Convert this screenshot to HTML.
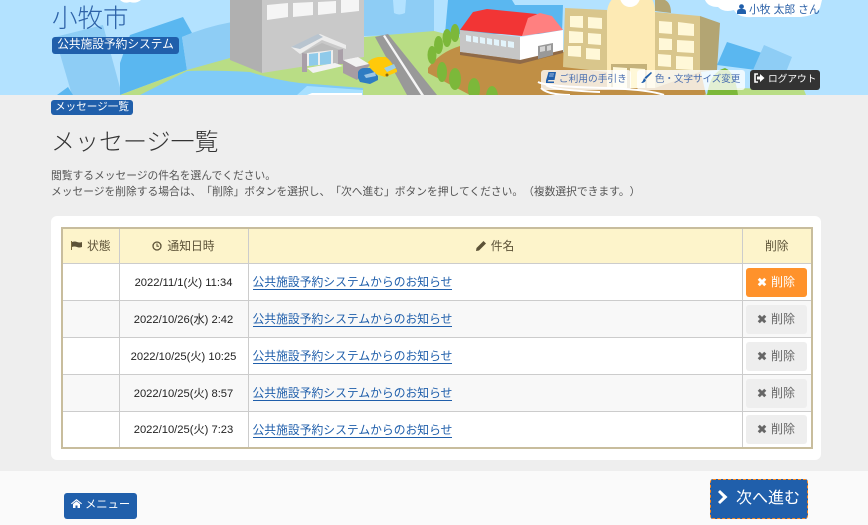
<!DOCTYPE html>
<html lang="ja"><head><meta charset="utf-8"><title>メッセージ一覧</title>
<style>
*{box-sizing:border-box}
html,body{margin:0;padding:0}
body{width:868px;height:525px;overflow:hidden;position:relative;background:#eee;font-family:"Liberation Sans","Noto Sans CJK JP",sans-serif;color:#333;text-spacing-trim:space-all}
.a{position:absolute;white-space:nowrap}
.badge{background:#205fab;color:#fff;border-radius:3px;text-align:center}
.hb{height:20px;top:70px;border-radius:3px;font-size:9.7px;line-height:19px;color:#4a6fb0;background:rgba(255,255,255,.78);text-align:left}
svg{display:block}
.ic{display:inline-block;vertical-align:-1px}
.card{left:51px;top:216px;width:770px;height:244px;background:#fff;border-radius:6px}
table{position:absolute;left:61px;top:227px;width:752px;border-collapse:collapse;table-layout:fixed;border:2px solid #c8bd9d;font-size:12px}
th{background:#fdf4cb;font-weight:400;color:#5c5237;border:1px solid #ccc;padding:0;height:35px;font-size:11.8px}
th .ic{margin-right:5px}
td{border:1px solid #ccc;padding:0;height:37px;font-size:11.2px;text-align:center;color:#222;background:#fff}
tr.g td{background:#f8f8f8}
td.l{text-align:left;padding-left:4px;font-size:11.8px}
td.l span{color:#205fab;border-bottom:1px solid #205fab;line-height:14px;display:inline-block;position:relative;top:1px}
.del{display:block;width:61px;height:29px;margin:1px 0 0 3px;border-radius:3px;background:#eee;color:#666;font-size:12px;line-height:28px;text-align:center}
.del.on{background:#ff922b;color:#fff}
</style></head><body>
<svg class="a" style="left:0;top:0" width="868" height="95" viewBox="0 0 868 95">
<rect width="868" height="95" fill="#b3e2ff"/>
<path d="M55 37 103 25 122 95H72Z" fill="#8ecdf5"/>
<path d="M120 63 130 35 183 17 192 33 182 37 187 70 120 95Z" fill="#5ab7f0"/>
<path d="M182 37Q205 27 232 22V60L187 71Z" fill="#8ecdf5"/>
<path d="M57 95 68 87 73 95Z" fill="#5ab7f0"/>
<path d="M364 0H434V34L364 36Z" fill="#8ecdf5"/>
<path d="M393 0H406L405 13Q399 16 394 13Z" fill="#b3e2ff"/>
<path d="M448 0H512L515 5H563L562 34H445Z" fill="#5ab7f0"/>
<path d="M120 95 187 70 230 58 364 37 434 31 470 40 470 95Z" fill="#b9dd85"/>
<path d="M187 71Q215 70 250 72 275 80 300 83L363 88V95H140Z" fill="#80cbf8"/>
<path d="M297 95 307 86 363 90V95Z" fill="#a8e0ff"/>
<path d="M307 95 312 93H362V95Z" fill="#fff"/>
<path d="M230 0H262V73L230 60Z" fill="#b0b0b0"/>
<path d="M262 0H364V57L262 73Z" fill="#c9c9c9"/>
<path d="M267 5 288 3V17L267 20Z M293 3 313 2V15L293 17Z M318 2 336 1V13L318 15Z M341 0H359V11L341 13Z" fill="#f5f5f5"/>
<path d="M302 53 322 43 343 51V64H307V72H302Z" fill="#bbb"/>
<path d="M302 53 307 54V72H302Z" fill="#a99fa8"/>
<path d="M338 50 343 49V64H338Z" fill="#a99fa8"/>
<path d="M307 53 333 50V64L307 66Z" fill="#eee"/>
<path d="M309 54 318 53V65L309 66Z M320 53 331 51V64L320 65Z" fill="#8fcaea"/>
<path d="M307 68 335 63 343 66 313 73Z" fill="#f2f2f2"/>
<path d="M291 47 320 34 346 45V49L322 40 300 54Z" fill="#ececec"/>
<path d="M291 47 318 34 323 37 300 49Z" fill="#b8c4cf"/>
<path d="M375 37 388 34 437 95H407Z" fill="#999"/>
<path d="M383 36 385 35 424 95H421Z" fill="#f5f5f5"/>
<path d="M368 62Q372 58 378 57H386Q390 60 393 65L397 70V72L385 77 376 74 370 68Z" fill="#ffc90a"/>
<path d="M384 68 394 64 396 68 387 72Z" fill="#9bd0e8"/>
<circle cx="387" cy="75" r="1.500" fill="#8a6a10"/>
<path d="M343 60 358 57 370 65 357 80 343 73Z" fill="#a79ca3"/>
<path d="M343 60 358 57 369 64 356 67Z" fill="#f2f2f2"/>
<path d="M358 72Q360 68 364 68H370L378 76V80L370 84 360 82 358 78Z" fill="#2e7cc2"/>
<path d="M364 75 375 72 376 76 366 78Z" fill="#9bc5e4"/>
<path d="M428 68Q440 52 460 46L564 52 700 68 706 95H470L428 73Z" fill="#c08f45"/>
<path d="M704 95 722 88 738 88 804 90 806 95Z" fill="#b9dd85"/>
<g fill="#7cb83a"><ellipse cx="432" cy="55" rx="4.500" ry="9"/><ellipse cx="438.500" cy="45" rx="4.500" ry="9"/><ellipse cx="447" cy="38" rx="4.500" ry="9"/><ellipse cx="455" cy="33" rx="4.500" ry="9"/>
<ellipse cx="442" cy="72" rx="5" ry="10"/><ellipse cx="455" cy="79" rx="6" ry="11"/><ellipse cx="474" cy="89" rx="6" ry="11"/><ellipse cx="492" cy="97" rx="6" ry="11"/>
<path d="M707 95Q710 72 725 68 735 72 738 95Z"/></g>
<path d="M460 30 473 12 487 9 537 14 522 36Z" fill="#f23535"/>
<path d="M522 36 528 18 540 13 552 16 563 30Z" fill="#ff8080"/>
<path d="M460 30 520 37V60L460 52Z" fill="#c6c6c6"/>
<path d="M520 37 563 30V50L520 63Z" fill="#fff"/>
<path d="M460 52 520 60 563 50V53L520 64 460 55Z" fill="#8f6a48"/>
<path d="M466 35 471 36V42L466 41Z M473 36 478 37V43L473 42Z M480 37 485 38V44L480 43Z M487 38 492 39V45L487 44Z M494 39 499 40V46L494 45Z M501 40 506 41V47L501 46Z M508 41 514 42V48L508 47Z" fill="#e3f4fb"/>
<path d="M538 46 553 43V55L538 59Z" fill="#999"/>
<path d="M540 47 545 46V51L540 52Z M547 46 551 45V50L547 51Z" fill="#d5d5d5"/>
<path d="M565 8 607 10V72L563 67Z" fill="#d9c68c"/>
<path d="M607 12Q608 0 618 -5H648Q655 0 655 12V88H607Z" fill="#fdeab4"/>
<path d="M655 12 700 16V72L655 88Z" fill="#d9c68c"/>
<path d="M655 0H665Q671 3 671 13L655 11Z" fill="#b3a573"/>
<path d="M700 16 720 23 717 70 700 72Z" fill="#b3a573"/>
<ellipse cx="630" cy="-3" rx="10" ry="10" fill="#fff"/>
<path d="M570 16 583 16V28L570 27Z M588 17 602 18V29L588 28Z M569 31 583 32V43L569 43Z M588 33 601 34V45L588 44Z M568 46 581 46V57L568 56Z M586 48 600 49V60L586 59Z" fill="#fff8d8"/>
<path d="M659 21 672 22V34L659 33Z M678 22 694 24V36L678 35Z M659 38 672 39V50L659 50Z M677 40 694 41V53L677 52Z M658 54 671 55V67L658 66Z M676 56 693 57V70L676 69Z" fill="#fff8d8"/>
<path d="M611 64H647V88H611Z" fill="#c5b27a"/><path d="M613 67 627 68V88H613Z M630 68 645 69V88H630Z" fill="#fff8d8"/>
<path d="M727 42 762 53 756 70 717 65Z" fill="#5ab7f0"/>
<path d="M764 45 792 57 780 87 750 77Z" fill="#8ecdf5"/>
<path d="M538 82Q548 87 610 88 650 90 664 95" fill="none" stroke="#fff" stroke-width="2"/>
<path d="M541 88Q548 95 570 95" fill="none" stroke="#fff" stroke-width="2"/>
<path d="M546 85Q552 90 600 92" fill="none" stroke="#fff" stroke-width="2"/>
<path d="M705 0Q708 7 718 7 724 13 734 10 738 18 752 17H800Q815 16 820 8L822 0Z" fill="#fff"/>
<path d="M120 0Q124 4 130 2 136 4 141 0Z" fill="#fff"/>
</svg>

<div class="a" style="left:52px;top:0;font-size:25.5px;line-height:38px;color:#2d62a8;font-weight:300">小牧市</div>
<div class="a badge" style="left:52px;top:37px;width:127px;height:17px;font-size:11.7px;line-height:16px">公共施設予約システム</div>
<div class="a" style="left:737px;top:3px;font-size:10.8px;line-height:15px;color:#2d62a8"><svg class="ic" width="9" height="10" viewBox="0 0 9 10" style="margin-right:3px"><circle cx="4.500" cy="2.600" r="2.400" fill="#205fab"/><path d="M0 10V8Q0 5 3 5H6Q9 5 9 8V10Z" fill="#205fab"/></svg>小牧 太郎 さん</div>

<div class="a hb" style="left:541px;width:90px;padding-left:5px"><svg class="ic" width="10" height="11" viewBox="0 0 10 11" style="margin-right:3px"><path d="M2.500 0H10L8.500 8H2.500L1.500 9.500H8V11H0V8.500Z" fill="#205fab"/><path d="M3.500 2H8M3 4H7.500" stroke="#cfe0f2" stroke-width=".7"/></svg>ご利用の手引き</div>
<div class="a hb" style="left:637px;width:108px;padding-left:4px;font-size:9.5px"><svg class="ic" width="11" height="11" viewBox="0 0 11 11" style="margin-right:3px"><path d="M10 0 11 1 5 7 3.500 5.500Z M3 6 5 8Q4 11 0 11 2 9.500 3 6Z" fill="#205fab"/></svg>色・文字サイズ変更</div>
<div class="a" style="left:750px;top:70px;width:70px;height:20px;background:#333;border-radius:3px;color:#fff;font-size:9.7px;line-height:19px;padding-left:4px"><svg class="ic" width="11" height="10" viewBox="0 0 11 10" style="margin-right:3px"><path d="M4 1H1V9H4" fill="none" stroke="#fff" stroke-width="1.600"/><path d="M3 3.500H6V1L10.500 5 6 9V6.500H3Z" fill="#fff"/></svg>ログアウト</div>

<div class="a badge" style="left:51px;top:100px;width:82px;height:15px;font-size:10.6px;line-height:14px">メッセージ一覧</div>
<div class="a" style="left:51px;top:125px;font-size:24px;line-height:36px;color:#333;font-weight:300">メッセージ一覧</div>
<div class="a" style="left:51px;top:168px;font-size:10.75px;line-height:16px;color:#555;white-space:pre">閲覧するメッセージの件名を選んでください。
メッセージを削除する場合は、「削除」ボタンを選択し、「次へ進む」ボタンを押してください。（複数選択できます。）</div>

<div class="a card"></div>
<table>
<colgroup><col style="width:57px"><col style="width:129px"><col style="width:494px"><col style="width:70px"></colgroup>
<tr><th><svg class="ic" width="11" height="9" viewBox="0 0 11 9" style="vertical-align:0"><path d="M0 0H1V9H0Z" fill="#7a6a3a"/><path d="M1 1Q4 0 6 1 9 2 11 1V6Q8 7 6 6 3 5 1 6Z" fill="#5c5237"/></svg>状態</th>
<th><svg class="ic" width="10" height="10" viewBox="0 0 10 10"><circle cx="5" cy="5" r="4" fill="none" stroke="#5c5237" stroke-width="1.300"/><path d="M5 2.500V5.300H7" fill="none" stroke="#5c5237"/></svg>通知日時</th>
<th><svg class="ic" width="10" height="10" viewBox="0 0 10 10"><path d="M7.500 0 10 2.500 3 9.500 0 10 .5 7Z" fill="#5c5237"/></svg>件名</th>
<th>削除</th></tr>
<tr><td></td><td>2022/11/1(火) 11:34</td><td class="l"><span>公共施設予約システムからのお知らせ</span></td><td><span class="del on"><svg class="ic" width="10" height="10" viewBox="0 0 9 9" style="margin-right:4px;vertical-align:-1px"><path d="M1 2.500 2.500 1 4.500 3 6.500 1 8 2.500 6 4.500 8 6.500 6.500 8 4.500 6 2.500 8 1 6.500 3 4.500Z" fill="#fff" stroke="#fff" stroke-width=".5"/></svg>削除</span></td></tr>
<tr class="g"><td></td><td>2022/10/26(水) 2:42</td><td class="l"><span>公共施設予約システムからのお知らせ</span></td><td><span class="del"><svg class="ic" width="10" height="10" viewBox="0 0 9 9" style="margin-right:4px;vertical-align:-1px"><path d="M1 2.500 2.500 1 4.500 3 6.500 1 8 2.500 6 4.500 8 6.500 6.500 8 4.500 6 2.500 8 1 6.500 3 4.500Z" fill="#666" stroke="#666" stroke-width=".5"/></svg>削除</span></td></tr>
<tr><td></td><td>2022/10/25(火) 10:25</td><td class="l"><span>公共施設予約システムからのお知らせ</span></td><td><span class="del"><svg class="ic" width="10" height="10" viewBox="0 0 9 9" style="margin-right:4px;vertical-align:-1px"><path d="M1 2.500 2.500 1 4.500 3 6.500 1 8 2.500 6 4.500 8 6.500 6.500 8 4.500 6 2.500 8 1 6.500 3 4.500Z" fill="#666" stroke="#666" stroke-width=".5"/></svg>削除</span></td></tr>
<tr class="g"><td></td><td>2022/10/25(火) 8:57</td><td class="l"><span>公共施設予約システムからのお知らせ</span></td><td><span class="del"><svg class="ic" width="10" height="10" viewBox="0 0 9 9" style="margin-right:4px;vertical-align:-1px"><path d="M1 2.500 2.500 1 4.500 3 6.500 1 8 2.500 6 4.500 8 6.500 6.500 8 4.500 6 2.500 8 1 6.500 3 4.500Z" fill="#666" stroke="#666" stroke-width=".5"/></svg>削除</span></td></tr>
<tr><td></td><td>2022/10/25(火) 7:23</td><td class="l"><span>公共施設予約システムからのお知らせ</span></td><td><span class="del"><svg class="ic" width="10" height="10" viewBox="0 0 9 9" style="margin-right:4px;vertical-align:-1px"><path d="M1 2.500 2.500 1 4.500 3 6.500 1 8 2.500 6 4.500 8 6.500 6.500 8 4.500 6 2.500 8 1 6.500 3 4.500Z" fill="#666" stroke="#666" stroke-width=".5"/></svg>削除</span></td></tr>
</table>

<div class="a" style="left:0;top:471px;width:868px;height:54px;background:#fafafa"></div>
<div class="a" style="left:64px;top:493px;width:73px;height:26px;background:#205fab;border-radius:3px;color:#fff;font-size:11.3px;line-height:25px;padding-left:7px"><svg class="ic" width="11" height="9" viewBox="0 0 11 9" style="margin-right:3px;vertical-align:0"><path d="M5.500 0 11 4.500 10.300 5.300 5.500 1.500 .7 5.300 0 4.500Z M2 5 5.500 2.200 9 5V9H6.500V6.500H4.500V9H2Z" fill="#fff"/></svg>メニュー</div>
<div class="a" style="left:710px;top:479px;width:98px;height:40px;background:#205fab;border:1px dashed #ff8a1e;border-radius:3px;color:#fff;font-size:16px;line-height:38px;padding-left:7px"><svg class="ic" width="11" height="14" viewBox="0 0 11 14" style="margin-right:7px;vertical-align:-1px"><path d="M2 0 9.500 7 2 14 0 12 5 7 0 2Z" fill="#fff"/></svg>次へ進む</div>
</body></html>
